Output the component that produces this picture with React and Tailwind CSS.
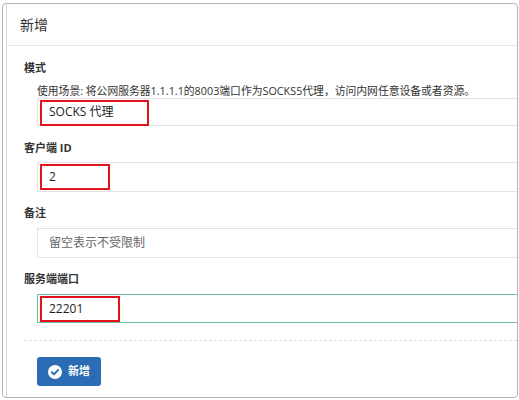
import React from "react";

const font = { fontFamily: '"Open Sans", "Noto Sans CJK SC", sans-serif' };

function Field({ label, children, className = "" }) {
  return (
    <>
      <div className={"pl-[17px] text-[11px] font-bold leading-[16px] text-[#333] " + className}>{label}</div>
      {children}
    </>
  );
}

function Input({ value, placeholder, focus, mark, className = "" }) {
  return (
    <div
      className={
        "relative ml-[30px] flex h-[30px] w-[520px] items-center border pl-[11px] text-[12px] " +
        (focus ? "border-[#6dbfa6] " : "border-[#e2e2e2] ") +
        className
      }
    >
      {value ? <span className="text-[#222]">{value}</span> : <span className="text-[#666]">{placeholder}</span>}
      {mark && (
        <span
          className="pointer-events-none absolute top-[1px] left-[2px] h-[26px] border-2 border-[#e3141c]"
          style={{ width: mark }}
        />
      )}
    </div>
  );
}

export default function App() {
  return (
    <div className="h-[400px] w-[519px] bg-white pt-[3px] pl-[2px]" style={font}>
      <div className="flex h-[395px] w-[516px] overflow-hidden rounded-[4px] border border-[#b5b5b5] bg-white">
        <div className="ml-[3px] flex-1 overflow-hidden border-l border-[#d8d8d8]">
          <div className="flex h-[42px] items-center border-b border-[#e6e6e6] pl-[13px] text-[14px] text-[#333]">
            新增
          </div>

          <Field label="模式" className="mt-[14px]">
            <div className="mt-[8px] pl-[30px] text-[10.8px] leading-[14px] whitespace-nowrap text-[#333]">
              使用场景: 将公网服务器1.1.1.1的8003端口作为SOCKS5代理，访问内网任意设备或者资源。
            </div>
            <Input value="SOCKS 代理" mark="109px" className="!h-[28px]" />
          </Field>

          <Field label="客户端 ID" className="mt-[14px]">
            <Input value="2" mark="70px" className="mt-[6px]" />
          </Field>

          <Field label="备注" className="mt-[13px]">
            <Input placeholder="留空表示不受限制" className="mt-[7px]" />
          </Field>

          <Field label="服务端端口" className="mt-[13px]">
            <Input value="22201" mark="80px" focus className="mt-[7px] !h-[29px]" />
          </Field>

          <div className="mt-[17px] ml-[17px] border-t border-dashed border-[#e0e0e0]" />

          <button className="mt-[16px] ml-[30px] flex h-[29px] w-[64px] items-center justify-center gap-[6px] rounded-[3px] bg-[#2b6db4] text-[11px] font-bold text-white">
            <svg width="14" height="14" viewBox="0 0 14 14">
              <circle cx="7" cy="7" r="7" fill="#fff" />
              <path d="M3.8 7.2 L6 9.3 L10.2 4.9" fill="none" stroke="#2b6db4" strokeWidth="1.9" strokeLinecap="round" strokeLinejoin="round" />
            </svg>
            新增
          </button>
        </div>
      </div>
    </div>
  );
}
